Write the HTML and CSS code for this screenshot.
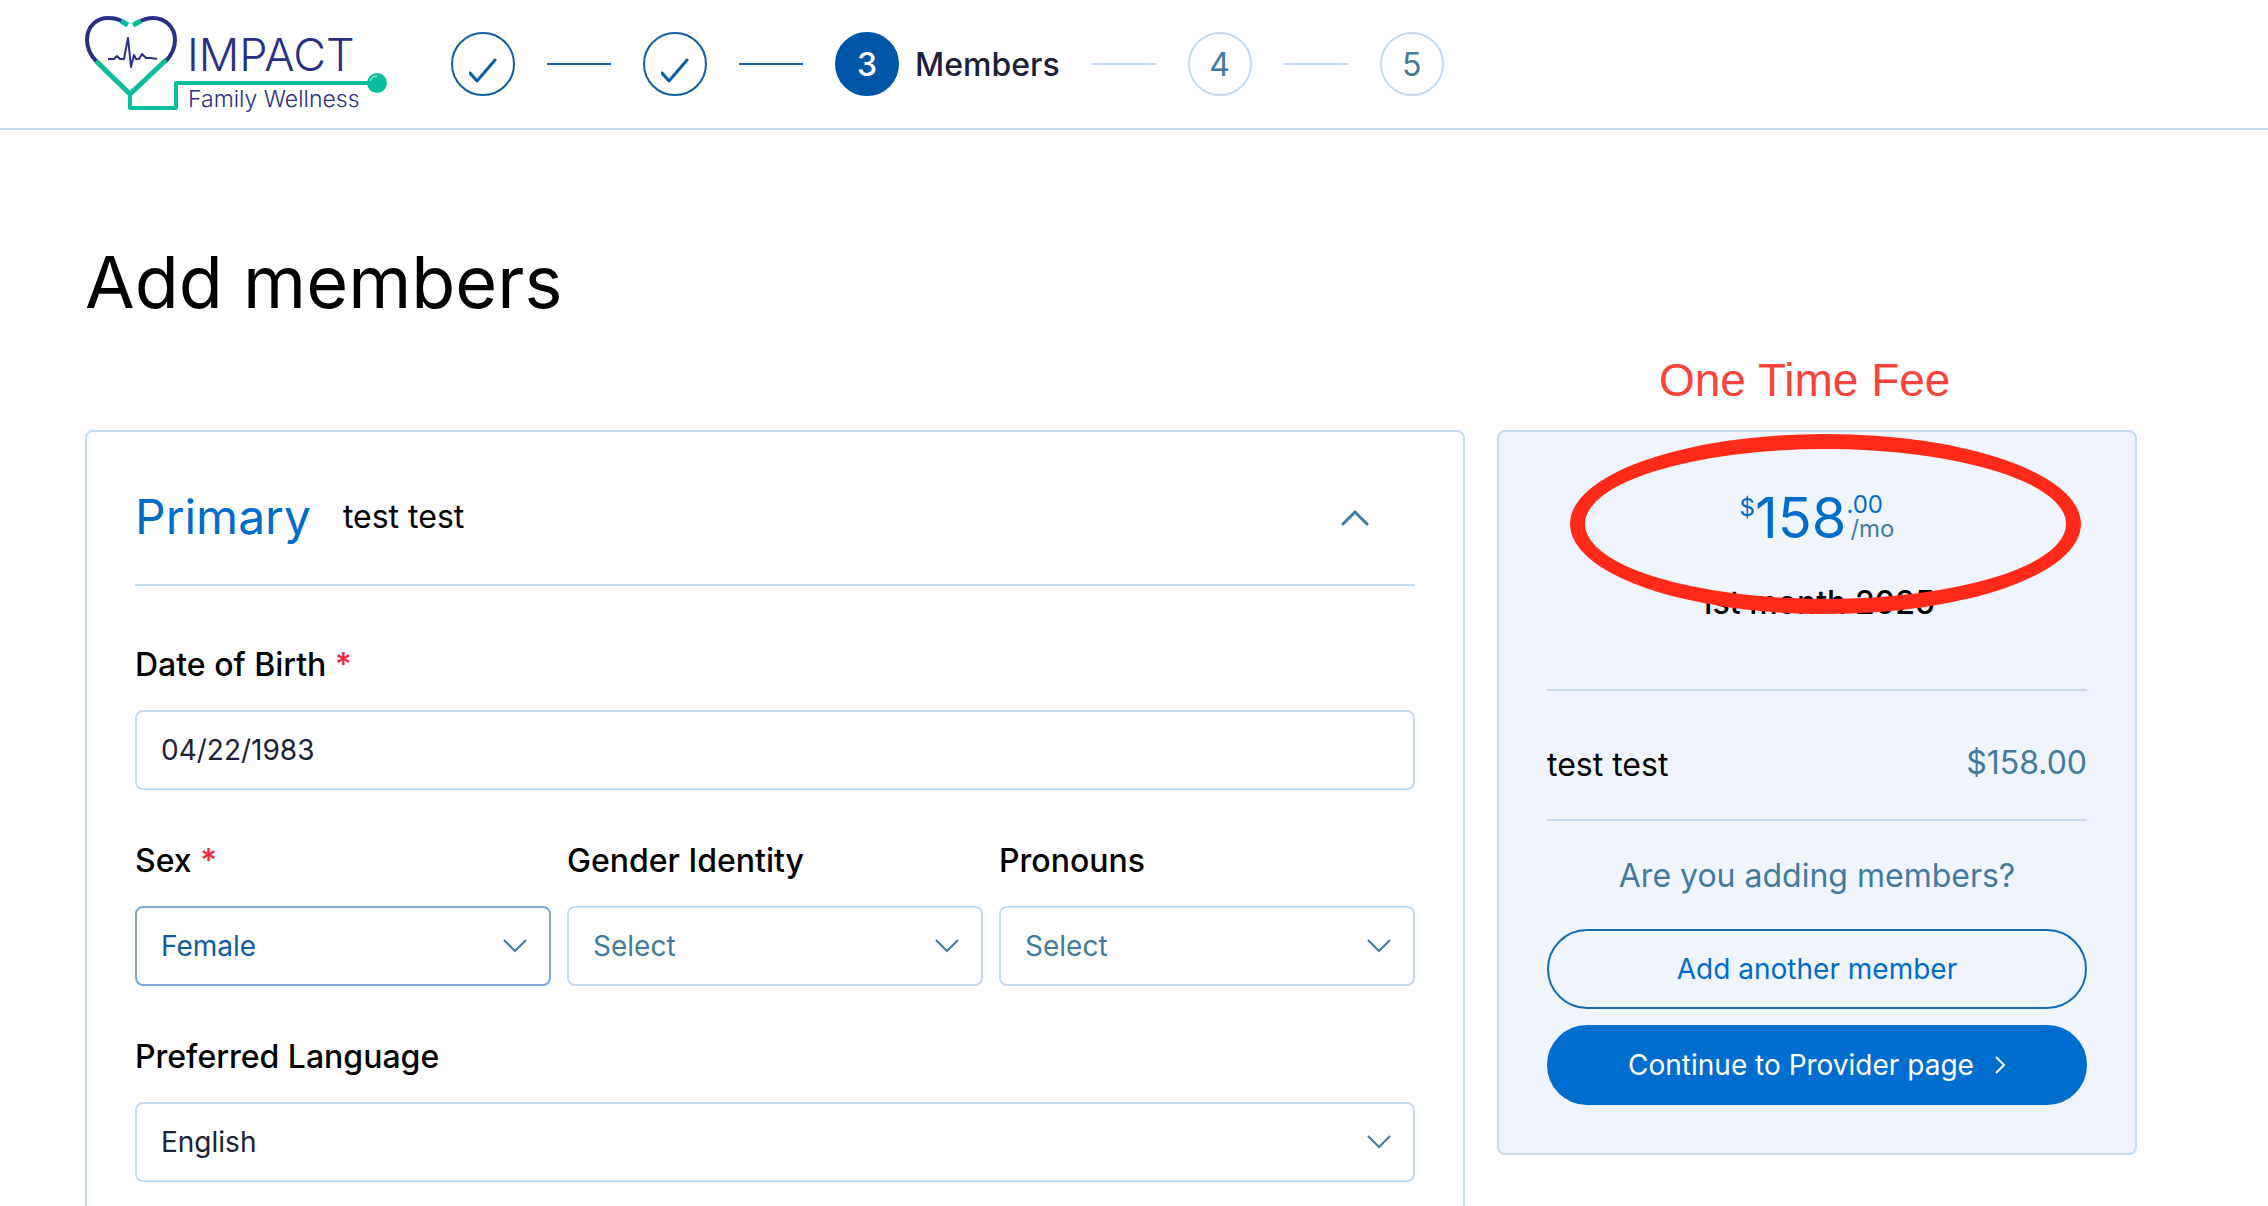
FILE: index.html
```html
<!DOCTYPE html>
<html lang="en">
<head>
    <meta charset="UTF-8">
    <meta name="viewport" content="width=device-width, initial-scale=1.0">
    <title>Add members - Impact Family Wellness</title>
    <link rel="stylesheet" href="styles.css">
</head>
<body>
    <header class="topbar">
        <a href="#" class="logo" aria-label="Impact Family Wellness">
            <svg width="304" height="100" viewBox="0 0 304 100" fill="none">
                <!-- heart -->
                <path d="M12 48 C5 41 2 34 2 26 C2 11 13 4 23 4 C29 4 34 5 38 8" stroke="#2a2f86" stroke-width="4"/>
                <path d="M54 8 C59 5 64 4 68 4 C80 4 90 13 90 26 C90 34 87 41 80 48" stroke="#2a2f86" stroke-width="4"/>
                <path d="M36 7 L43 11 M48 11 L56 7" stroke="#0bbd9c" stroke-width="5"/>
                <path d="M11 47 L45 80 L81 46" stroke="#0bbd9c" stroke-width="5"/>
                <!-- stethoscope tube -->
                <path d="M45 78 V94 H91 V69 H285" stroke="#0bbd9c" stroke-width="4" stroke-linejoin="round"/>
                <circle cx="292" cy="69" r="10" fill="#0bbd9c"/>
                <path d="M285 67 Q287 62 292 62" stroke="#d9f6ef" stroke-width="1"/>
                <path d="M23 45 H29 L32 42 L35 45 H39 L43 24 L46 53 L49 41 L51 45 H54 L57 40 L61 44 L66 44 L72 45" stroke="#2a2f86" stroke-width="2" stroke-linejoin="round"/>
                <text x="102" y="57" class="logo-name">IMPACT</text>
                <text x="103" y="93" class="logo-sub">Family Wellness</text>
            </svg>
        </a>
        <ol class="steps">
            <li class="step done">
                <span class="circle"><svg width="28" height="28" viewBox="0 0 28 28"><path d="M1 16 L8 24 L26 3"/></svg></span>
            </li>
            <li class="step done">
                <span class="circle"><svg width="28" height="28" viewBox="0 0 28 28"><path d="M1 16 L8 24 L26 3"/></svg></span>
            </li>
            <li class="step active">
                <span class="circle">3</span>
                <span class="step-name">Members</span>
            </li>
            <li class="step"><span class="circle">4</span></li>
            <li class="step"><span class="circle">5</span></li>
        </ol>
    </header>

    <main>
        <h1>Add members</h1>
        <div class="columns">
            <form class="card">
                <div class="card-head">
                    <h2>Primary</h2>
                    <span class="name">test test</span>
                    <button type="button" class="toggle" aria-label="Collapse">
                        <svg width="28" height="18" viewBox="0 0 28 18"><path d="M2 16 L14 4 L26 16"/></svg>
                    </button>
                </div>

                <div class="field">
                    <label for="dob">Date of Birth <span class="req">*</span></label>
                    <input type="text" id="dob" value="04/22/1983">
                </div>

                <div class="field-row">
                    <div class="field">
                        <label for="sex">Sex <span class="req">*</span></label>
                        <div class="select focused">
                            <select id="sex"><option>Female</option><option>Male</option></select>
                            <svg width="24" height="14" viewBox="0 0 24 14"><path d="M1 1 L12 12 L23 1"/></svg>
                        </div>
                    </div>
                    <div class="field">
                        <label for="gender">Gender Identity</label>
                        <div class="select empty">
                            <select id="gender"><option>Select</option></select>
                            <svg width="24" height="14" viewBox="0 0 24 14"><path d="M1 1 L12 12 L23 1"/></svg>
                        </div>
                    </div>
                    <div class="field">
                        <label for="pronouns">Pronouns</label>
                        <div class="select empty">
                            <select id="pronouns"><option>Select</option></select>
                            <svg width="24" height="14" viewBox="0 0 24 14"><path d="M1 1 L12 12 L23 1"/></svg>
                        </div>
                    </div>
                </div>

                <div class="field">
                    <label for="language">Preferred Language</label>
                    <div class="select">
                        <select id="language"><option>English</option><option>Spanish</option></select>
                        <svg width="24" height="14" viewBox="0 0 24 14"><path d="M1 1 L12 12 L23 1"/></svg>
                    </div>
                </div>
            </form>

            <aside class="summary">
                <div class="fee-note">One Time Fee</div>
                <div class="fee-ring"></div>

                <div class="price">
                    <span class="currency">$</span>
                    <span class="amount">158</span>
                    <span class="rest"><span>.00</span><span class="per">/mo</span></span>
                </div>
                <p class="period">1st month 2025</p>
                <div class="member">
                    <span>test test</span>
                    <span class="cost">$158.00</span>
                </div>
                <p class="question">Are you adding members?</p>
                <button type="button" class="btn">Add another member</button>
                <button type="button" class="btn primary">
                    Continue to Provider page
                    <svg width="12" height="18" viewBox="0 0 12 18"><path d="M2 1 L10 9 L2 17"/></svg>
                </button>
            </aside>
        </div>
    </main>
</body>
</html>
```
FILE: styles.css
```css
* {
    box-sizing: border-box;
}

body {
    margin: 0;
    background: #fff;
    color: #000;
    font-family: Inter, 'Liberation Sans', sans-serif;
    font-size: 32px;
    line-height: 46px;
}

h1, h2, p {
    margin: 0;
    font-weight: 400;
}

/* header */
.topbar {
    display: flex;
    align-items: center;
    height: 130px;
    padding: 0 85px;
    border-bottom: 2px solid #c4dbf1;
}

.logo {
    display: flex;
    margin-right: 62px;
}

.logo-name {
    fill: #2a2f86;
    font-size: 45px;
    font-weight: 300;
}

.logo-sub {
    fill: #2a2f86;
    font-size: 23px;
    font-weight: 300;
}

.steps {
    display: flex;
    margin: 0;
    padding: 0;
    list-style: none;
}

.step {
    display: flex;
    align-items: center;
    color: #427a9f;
}

.step:not(:last-child)::after {
    content: "";
    width: 64px;
    height: 2px;
    margin: 0 32px;
    background: #c4dbf1;
}

.circle {
    display: flex;
    align-items: center;
    justify-content: center;
    width: 64px;
    height: 64px;
    padding-top: 2px;
    border: 2px solid #c4dbf1;
    border-radius: 50%;
}

.step.done .circle {
    padding-top: 14px;
    border-color: #0f5ba4;
}

.step.done path {
    fill: none;
    stroke: #0f5ba4;
    stroke-width: 3;
    stroke-linecap: round;
    stroke-linejoin: round;
}

.step.done::after {
    background: #1b67ac;
}

.step.active .circle {
    border-color: #0056a6;
    background: #0056a6;
    color: #fff;
    font-weight: 500;
}

.step-name {
    margin-left: 16px;
    padding-top: 2px;
    color: #1b2137;
    font-weight: 500;
}

/* page */
main {
    padding: 108px 131px 0 85px;
}

h1 {
    margin-bottom: 104px;
    font-size: 72px;
    line-height: 88px;
}

.columns {
    display: grid;
    grid-template-columns: 1fr 640px;
    align-items: start;
    gap: 32px;
}

.card {
    padding: 48px;
    border: 2px solid #c4dbf1;
    border-radius: 8px;
}

.card-head {
    display: flex;
    align-items: center;
    margin-bottom: 56px;
    padding-bottom: 30px;
    border-bottom: 2px solid #c4dbf1;
}

h2 {
    color: #006bc9;
    font-size: 48px;
    line-height: 74px;
}

.name {
    margin-left: 32px;
}

.toggle {
    display: flex;
    margin: 0 46px 0 auto;
    padding: 0;
    border: 0;
    background: none;
    cursor: pointer;
}

.toggle path {
    fill: none;
    stroke: #427a9f;
    stroke-width: 3;
    stroke-linecap: round;
}

/* form fields */
.field {
    margin-bottom: 48px;
}

.field-row {
    display: grid;
    grid-template-columns: repeat(3, 1fr);
    gap: 16px;
}

label {
    display: block;
    margin-bottom: 22px;
    font-weight: 500;
}

.req {
    color: #f3263c;
}

input,
select {
    display: block;
    width: 100%;
    height: 80px;
    padding: 0 24px;
    border: 2px solid #c4dbf1;
    border-radius: 8px;
    background: #fff;
    color: #1b2137;
    font-family: inherit;
    font-size: 28px;
    appearance: none;
}

.select {
    position: relative;
}

.select svg {
    position: absolute;
    top: 33px;
    right: 24px;
    pointer-events: none;
}

.select path {
    fill: none;
    stroke: #427a9f;
    stroke-width: 2;
}

.select.focused select {
    border-color: #7aabd8;
    color: #0f5ba4;
}

.select.empty select {
    color: #427a9f;
}

/* summary */
.summary {
    position: relative;
    display: flex;
    flex-direction: column;
    padding: 48px;
    border: 2px solid #c4dbf1;
    border-radius: 8px;
    background: #f0f5fd;
}

.fee-note {
    position: absolute;
    bottom: 100%;
    left: 160px;
    padding-bottom: 26px;
    color: #f8443c;
    font-family: 'Liberation Sans', Arial, sans-serif;
    font-size: 46px;
    line-height: 52px;
}

.fee-ring {
    position: absolute;
    top: 2px;
    left: 71px;
    width: 511px;
    height: 180px;
    border: 15px solid #ff2a1a;
    border-radius: 50%;
    pointer-events: none;
}

.price {
    display: flex;
    justify-content: center;
    color: #006bc9;
    font-size: 24px;
    line-height: 24px;
}

.currency {
    margin-top: 16px;
}

.amount {
    font-size: 56px;
    line-height: 76px;
}

.rest {
    display: flex;
    flex-direction: column;
    margin-top: 13px;
}

.per {
    margin-left: 4px;
    color: #427a9f;
}

.period {
    margin-top: 24px;
    padding-bottom: 63px;
    border-bottom: 2px solid #c4dbf1;
    font-weight: 500;
    text-align: center;
}

.member {
    display: flex;
    justify-content: space-between;
    padding: 50px 0 30px;
    border-bottom: 2px solid #c4dbf1;
    line-height: 48px;
}

.cost {
    color: #427a9f;
    line-height: 44px;
}

.question {
    margin: 32px 0 30px;
    color: #427a9f;
    text-align: center;
}

.btn {
    display: flex;
    align-items: center;
    justify-content: center;
    gap: 20px;
    height: 80px;
    border: 2px solid #146bb8;
    border-radius: 40px;
    background: none;
    color: #006bc9;
    font-family: inherit;
    font-size: 28px;
    cursor: pointer;
}

.btn.primary {
    margin-top: 16px;
    border-color: #006dcf;
    background: #006dcf;
    color: #fff;
}

.btn path {
    fill: none;
    stroke: #fff;
    stroke-width: 2;
}
```
